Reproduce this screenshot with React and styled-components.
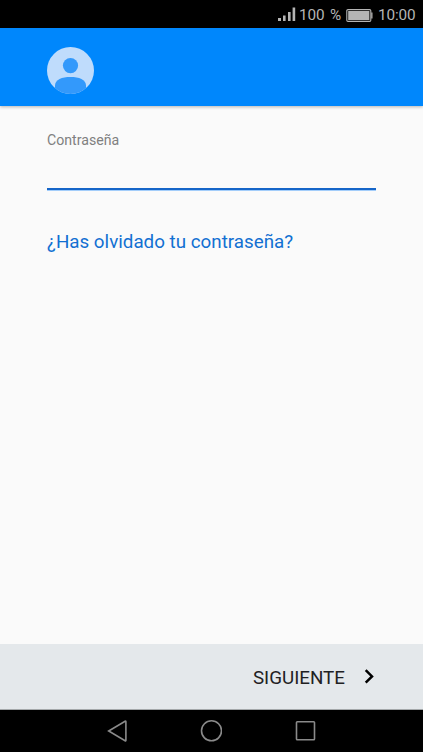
import React, { useState } from 'react';
import styled, { createGlobalStyle } from 'styled-components';

const App = () => {
  const [ password, setPassword ] = useState('');

  return (
    <Screen>
      <GlobalStyle />
      <StatusBar>
        <SignalIcon width="18" height="15" viewBox="0 0 18 15">
          <path d="M0 11h3v3H0zM5 8.5h2.6V14H5zM10 5h2.6v9H10zM14.6 0.5h2.6V14h-2.6z" fill="#b4b4b4" />
        </SignalIcon>
        <StatusText $width={27} $gap={3}>100</StatusText>
        <StatusText $width={12} $gap={4}>%</StatusText>
        <BatteryIcon width="27" height="13" viewBox="0 0 27 13">
          <rect x="0.8" y="0.6" width="24" height="11.8" rx="1.2" fill="none" stroke="#b4b4b4" strokeWidth="1.1" />
          <rect x="2.2" y="2" width="21.2" height="9" fill="#b4b4b4" />
          <path d="M25.2 3.6h1.3v5.8h-1.3z" fill="#b4b4b4" />
        </BatteryIcon>
        <StatusText $width={38} $gap={5}>10:00</StatusText>
      </StatusBar>
      <Header>
        <svg width="47" height="47" viewBox="0 0 47 47">
          <defs>
            <clipPath id="avatar"><circle cx="23.5" cy="23.5" r="23.5" /></clipPath>
          </defs>
          <circle cx="23.5" cy="23.5" r="23.5" fill="#bfdcfc" />
          <g clipPath="url(#avatar)" fill="#3399fb">
            <circle cx="23.5" cy="18.6" r="7.6" />
            <path d="M8 47V38.5C8 32.5 15 30 23.5 30S39 32.5 39 38.5V47z" />
          </g>
        </svg>
      </Header>
      <Content>
        <Label htmlFor="password">Contraseña</Label>
        <PasswordInput id="password" type="password" value={password} onChange={e => setPassword(e.target.value)} />
        <ForgotLink href="#">¿Has olvidado tu contraseña?</ForgotLink>
      </Content>
      <Footer>
        <NextButton>
          <span>SIGUIENTE</span>
          <svg width="10" height="15" viewBox="0 0 10 15">
            <path d="M1.7 1.2L8 7.4L1.7 13.6" fill="none" stroke="#000" strokeWidth="2.5" />
          </svg>
        </NextButton>
      </Footer>
      <NavBar>
        <svg width="22" height="22" viewBox="-0.5 0 22 22">
          <path d="M2.2 11L18.6 1.2Q19.4 0.8 19.4 1.8V20.2Q19.4 21.2 18.6 20.8Z" />
        </svg>
        <svg width="22" height="22" viewBox="-0.5 0 22 22">
          <circle cx="11" cy="10.8" r="10" />
        </svg>
        <svg width="22" height="22" viewBox="-0.5 0 22 22">
          <rect x="2" y="1.8" width="18" height="18" rx="0.8" />
        </svg>
      </NavBar>
    </Screen>
  );
}

const GlobalStyle = createGlobalStyle`
  * {
    box-sizing: border-box;
  }

  body {
    margin: 0;
    font-family: Roboto, sans-serif;
  }

  svg {
    display: block;
    flex: none;
  }
`;

const Screen = styled.div`
  display: flex;
  flex-direction: column;
  height: 752px;
  overflow: hidden;
  background: #fafafa;
`;

const StatusBar = styled.div`
  display: flex;
  align-items: center;
  justify-content: flex-end;
  height: 28px;
  padding: 2px 7px 0 0;
  background: #000;
`;

const SignalIcon = styled.svg`
  margin-bottom: 1px;
`;

const BatteryIcon = styled.svg`
  margin-left: 4px;
`;

const StatusText = styled.span`
  width: ${p => p.$width}px;
  margin-left: ${p => p.$gap}px;
  font-size: 15.3px;
  letter-spacing: -0.1px;
  line-height: 18px;
  white-space: nowrap;
  color: #b4b4b4;
`;

const Header = styled.header`
  display: flex;
  height: 77.5px;
  padding: 19px 47px 0;
  background: #0087fc;
  box-shadow: 0 1px 3px rgba(0, 0, 0, 0.28);
`;

const Content = styled.main`
  flex: 1;
  display: flex;
  flex-direction: column;
  align-items: flex-start;
  padding: 25.5px 47px 0;
`;

const Label = styled.label`
  font-size: 14.15px;
  line-height: 18px;
  color: #808080;
`;

const PasswordInput = styled.input`
  width: 100%;
  height: 41px;
  padding: 0;
  border: none;
  border-bottom: 2px solid #1565c8;
  border-radius: 0;
  outline: none;
  background: transparent;
  box-shadow: 0 1px 0 #a3cdfa;
  font: inherit;
  font-size: 18px;
`;

const ForgotLink = styled.a`
  margin-top: 40px;
  font-size: 18.8px;
  line-height: 24px;
  white-space: nowrap;
  text-decoration: none;
  color: #1270d2;
`;

const Footer = styled.footer`
  display: flex;
  align-items: center;
  justify-content: flex-end;
  height: 66px;
  padding-right: 49px;
  border-bottom: 1px solid #a4a8aa;
  background: #e4e8eb;
`;

const NextButton = styled.button`
  display: flex;
  align-items: center;
  gap: 19px;
  padding: 0;
  border: none;
  background: none;
  font: inherit;
  font-size: 18.8px;
  line-height: 24px;
  color: #1f2123;

  span {
    padding-top: 2px;
  }
`;

const NavBar = styled.nav`
  display: flex;
  justify-content: center;
  gap: 72px;
  height: 42px;
  padding: 10px 1px 0 0;
  background: #000;

  path, circle, rect {
    fill: none;
    stroke: #8a8a8a;
    stroke-width: 1.6;
  }
`;

export default App;
